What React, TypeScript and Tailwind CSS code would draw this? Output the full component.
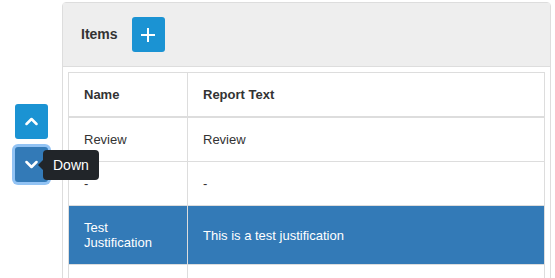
import React from "react";

// Chevron used by the move up / move down buttons
function Chevron({ dir }: { dir: "up" | "down" }) {
  const pts = dir === "up" ? "1.5,7 6.5,2 11.5,7" : "1.5,2 6.5,7 11.5,2";
  return (
    <svg width="13" height="9" viewBox="0 0 13 9" fill="none">
      <polyline points={pts} stroke="white" strokeWidth="2.5" strokeLinecap="round" strokeLinejoin="round" />
    </svg>
  );
}

const rows = [
  { name: "Review", text: "Review" },
  { name: "-", text: "-" },
  { name: "Test Justification", text: "This is a test justification", selected: true },
  { name: "\u00a0", text: "\u00a0" },
];

export default function App() {
  return (
    <div className="h-screen w-full overflow-hidden bg-white font-['Liberation_Sans',Arial,sans-serif] text-[13px] text-[#333]">
      <div className="flex pt-[2px] pr-[4px]">
        {/* --- move buttons --- */}
        <div className="w-[62px] shrink-0 pl-[15px] pt-[102px]">
          <div className="flex flex-col gap-[8px]">
            <button className="flex h-[35px] w-[33px] items-center justify-center rounded-[3px] bg-[#1b93d3]">
              <Chevron dir="up" />
            </button>
            <div className="relative">
              <button className="flex h-[35px] w-[33px] items-center justify-center rounded-[3px] bg-[#337ab7] shadow-[0_0_0_3px_#92c3f4]">
                <Chevron dir="down" />
              </button>
              <div className="absolute left-[28px] top-[3px] z-10 rounded-[4px] bg-[#212529] px-[10px] py-[5px] text-[14px] leading-[20px] text-white whitespace-nowrap">
                <span className="absolute left-[-5px] top-[10px] h-0 w-0 border-y-[5px] border-r-[5px] border-y-transparent border-r-[#212529]" />
                Down
              </div>
            </div>
          </div>
        </div>

        {/* --- panel --- */}
        <div className="flex-1 rounded-t-[4px] border border-[#ddd]">
          <div className="flex items-center gap-[14px] border-b border-[#ddd] bg-[#eee] py-[14px] pl-[18px]">
            <span className="text-[14px] font-bold">Items</span>
            <button className="flex h-[35px] w-[33px] items-center justify-center rounded-[3px] bg-[#1b93d3]">
              <svg width="16" height="16" viewBox="0 0 16 16">
                <path d="M8 1v14M1 8h14" stroke="white" strokeWidth="2" />
              </svg>
            </button>
          </div>
          <div className="p-[5px]">
            <table className="w-full table-fixed border-collapse border border-[#ddd]">
              <colgroup>
                <col className="w-[119px]" />
                <col />
              </colgroup>
              <thead>
                <tr>
                  <th className="border border-b-2 border-[#ddd] px-[15px] py-[14px] text-left font-bold leading-[15px]">Name</th>
                  <th className="border border-b-2 border-[#ddd] px-[15px] py-[14px] text-left font-bold leading-[15px]">Report Text</th>
                </tr>
              </thead>
              <tbody>
                {rows.map((r, i) => (
                  <tr key={i} className={r.selected ? "bg-[#337ab7] text-white" : ""}>
                    <td className="border border-[#ddd] px-[15px] py-[14px] leading-[15px]">{r.name}</td>
                    <td className="border border-[#ddd] px-[15px] py-[14px] leading-[15px]">{r.text}</td>
                  </tr>
                ))}
              </tbody>
            </table>
          </div>
        </div>
      </div>
    </div>
  );
}
